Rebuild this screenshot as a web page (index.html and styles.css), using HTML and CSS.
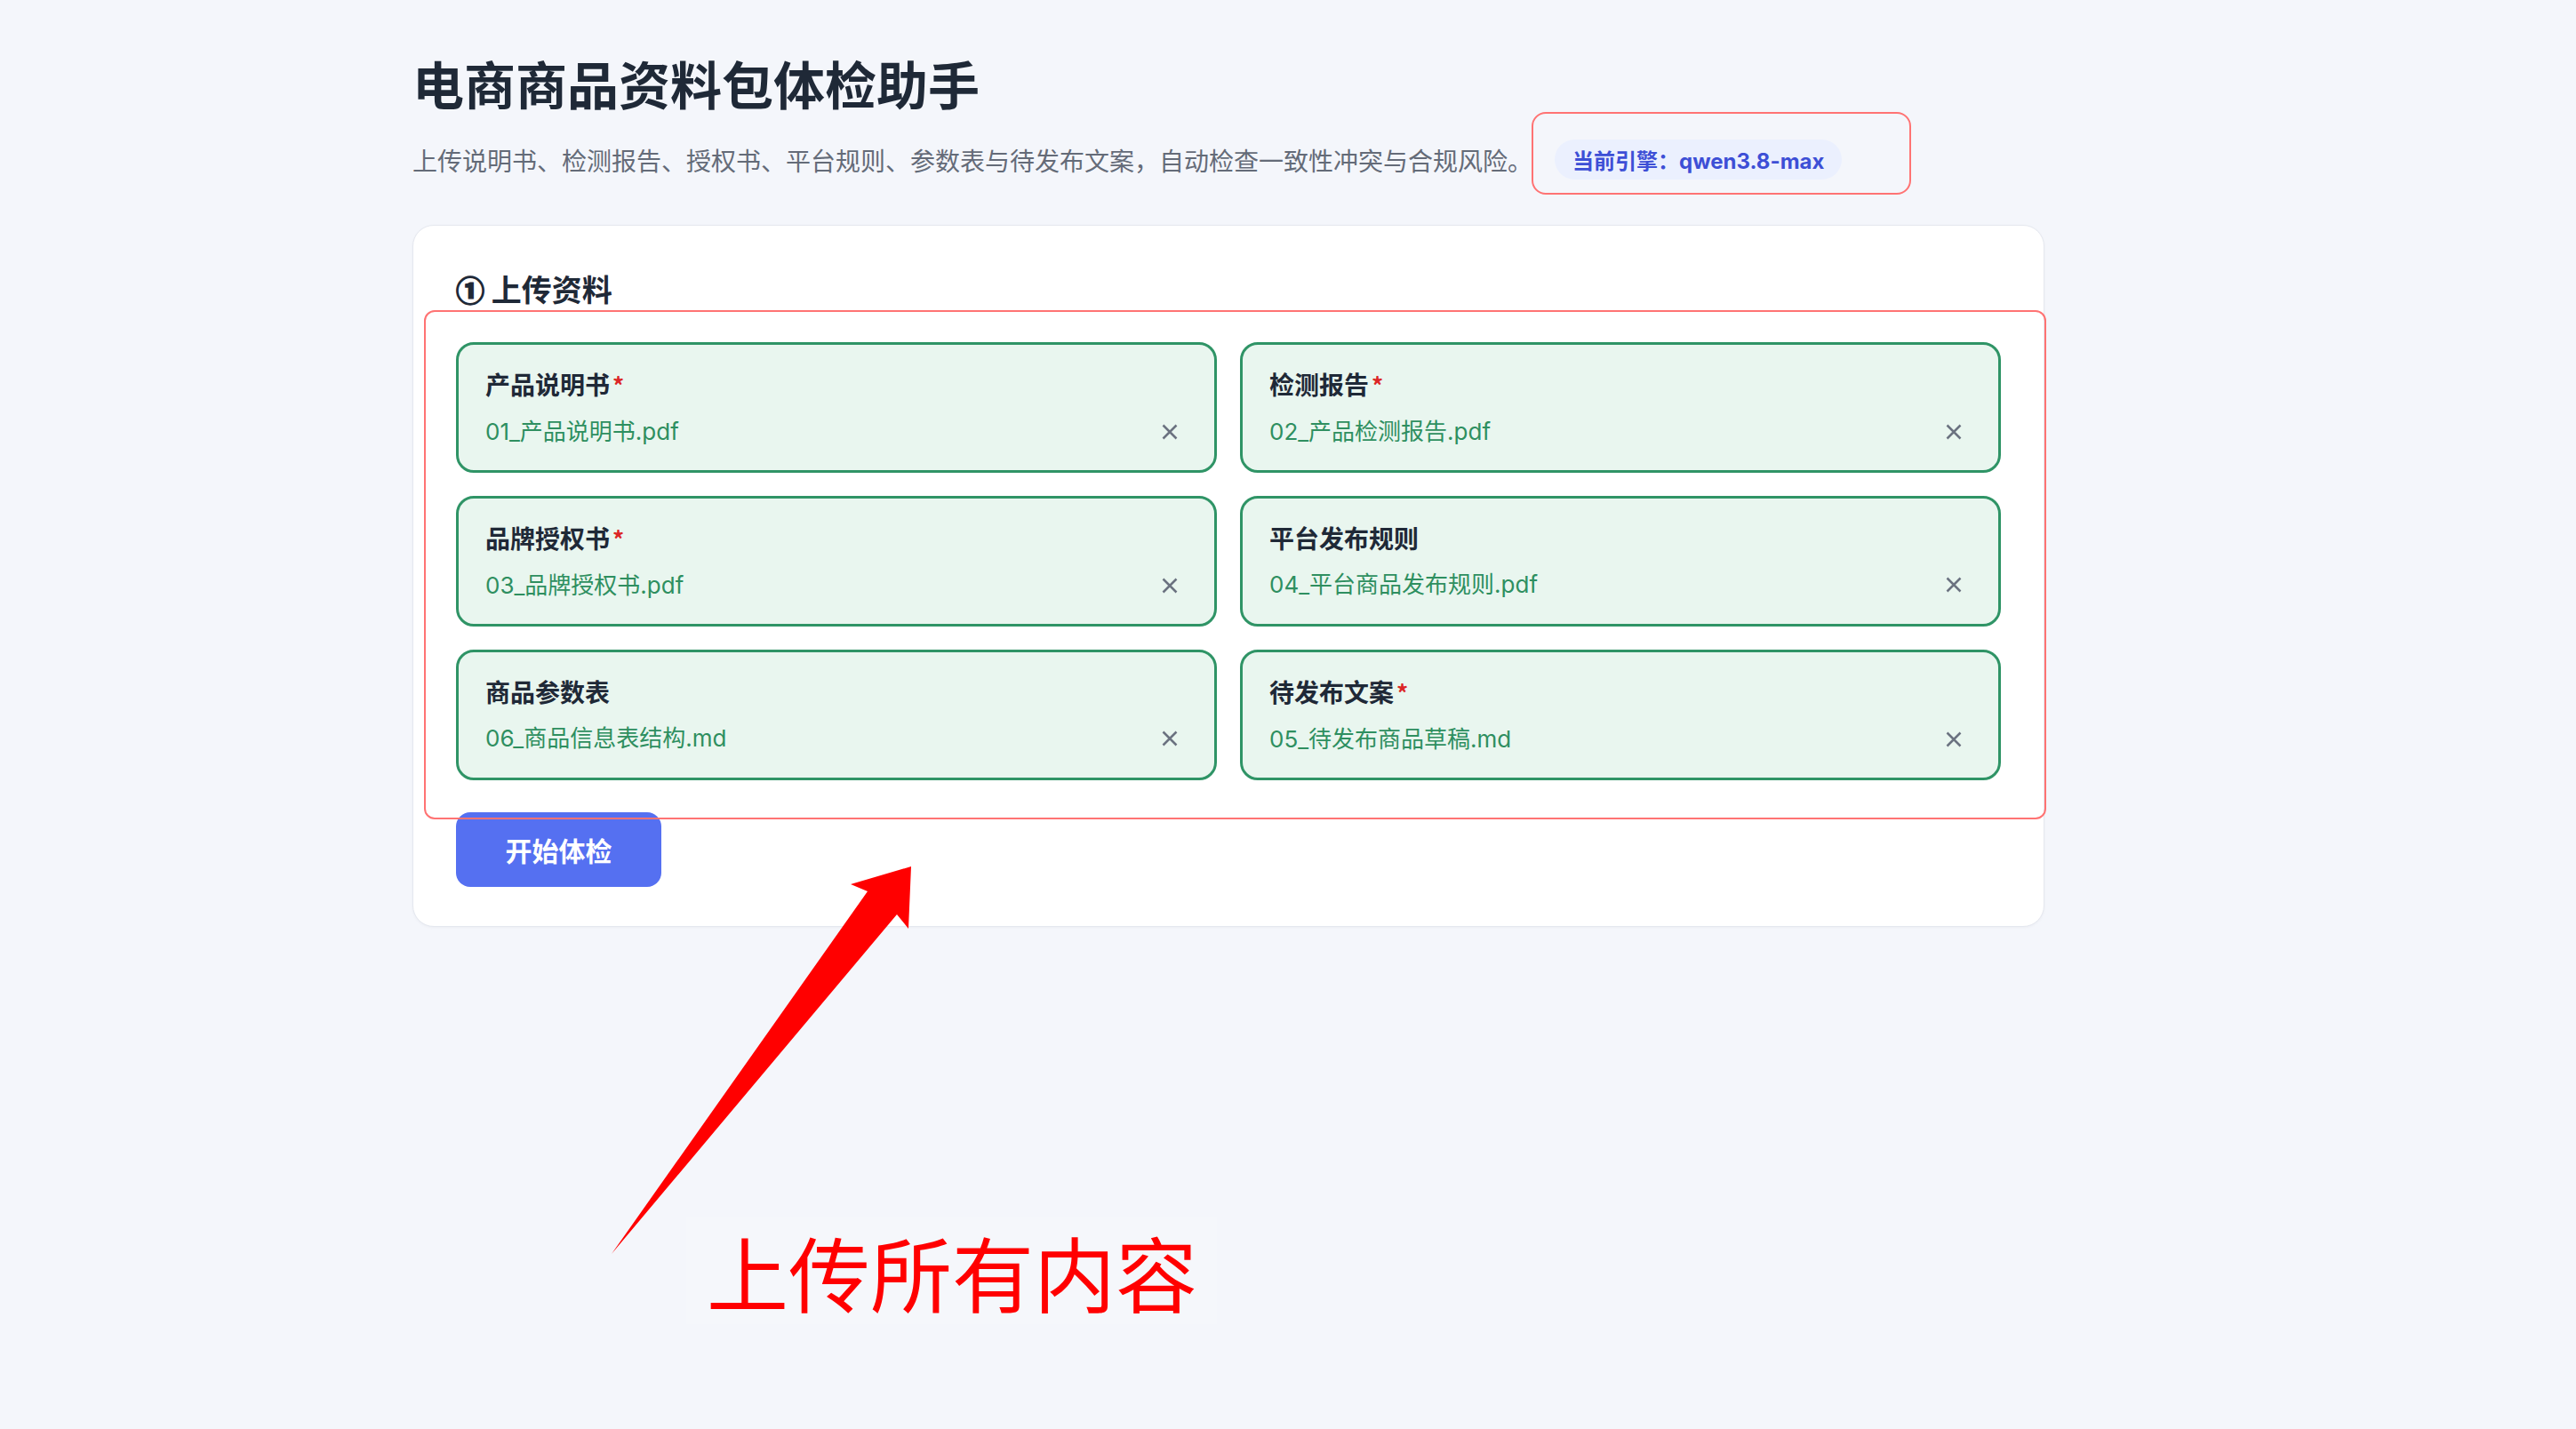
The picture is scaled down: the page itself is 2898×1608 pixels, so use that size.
FILE: index.html
```html
<!DOCTYPE html>
<html lang="zh-CN">
<head>
<meta charset="utf-8">
<title>电商商品资料包体检助手</title>
<link rel="stylesheet" href="styles.css">
</head>
<body>
<main class="page">
  <h1 class="title">电商商品资料包体检助手</h1>
  <div class="sub-row">
    <p class="subtitle">上传说明书、检测报告、授权书、平台规则、参数表与待发布文案，自动检查一致性冲突与合规风险。</p>
    <span class="engine-pill">当前引擎：qwen3.8-max</span>
  </div>

  <section class="card">
    <h2 class="section-title"><span class="step">①</span> 上传资料</h2>
    <div class="file-grid">
      <div class="file-card">
        <div class="file-label">产品说明书<span class="req">*</span></div>
        <div class="file-row"><span class="file-name">01_产品说明书.pdf</span><span class="file-remove"><svg viewBox="0 0 18 18" width="18" height="18"><path d="M1.5 1.5 L16.5 16.5 M16.5 1.5 L1.5 16.5"/></svg></span></div>
      </div>
      <div class="file-card">
        <div class="file-label">检测报告<span class="req">*</span></div>
        <div class="file-row"><span class="file-name">02_产品检测报告.pdf</span><span class="file-remove"><svg viewBox="0 0 18 18" width="18" height="18"><path d="M1.5 1.5 L16.5 16.5 M16.5 1.5 L1.5 16.5"/></svg></span></div>
      </div>
      <div class="file-card">
        <div class="file-label">品牌授权书<span class="req">*</span></div>
        <div class="file-row"><span class="file-name">03_品牌授权书.pdf</span><span class="file-remove"><svg viewBox="0 0 18 18" width="18" height="18"><path d="M1.5 1.5 L16.5 16.5 M16.5 1.5 L1.5 16.5"/></svg></span></div>
      </div>
      <div class="file-card">
        <div class="file-label">平台发布规则</div>
        <div class="file-row"><span class="file-name">04_平台商品发布规则.pdf</span><span class="file-remove"><svg viewBox="0 0 18 18" width="18" height="18"><path d="M1.5 1.5 L16.5 16.5 M16.5 1.5 L1.5 16.5"/></svg></span></div>
      </div>
      <div class="file-card">
        <div class="file-label">商品参数表</div>
        <div class="file-row"><span class="file-name">06_商品信息表结构.md</span><span class="file-remove"><svg viewBox="0 0 18 18" width="18" height="18"><path d="M1.5 1.5 L16.5 16.5 M16.5 1.5 L1.5 16.5"/></svg></span></div>
      </div>
      <div class="file-card">
        <div class="file-label">待发布文案<span class="req">*</span></div>
        <div class="file-row"><span class="file-name">05_待发布商品草稿.md</span><span class="file-remove"><svg viewBox="0 0 18 18" width="18" height="18"><path d="M1.5 1.5 L16.5 16.5 M16.5 1.5 L1.5 16.5"/></svg></span></div>
      </div>
    </div>
    <button class="start-btn" type="button">开始体检</button>
  </section>
</main>

<div class="mark mark-engine"></div>
<div class="mark mark-upload"></div>
<svg class="mark-arrow" viewBox="0 0 2898 1608" width="2898" height="1608">
  <polygon points="1025,975 1022,1045 1009,1029 688,1411 976,1003 957,995"/>
</svg>
<div class="mark-note">上传所有内容</div>
</body>
</html>
```

FILE: styles.css
```css
html, body {
  margin: 0;
  padding: 0;
}

body {
  position: relative;
  min-height: 1608px;
  background: #f4f6fb;
  font-family: "Inter", "Noto Sans CJK SC", "Noto Sans", sans-serif;
  color: #1f2937;
  overflow: hidden;
}

.page {
  width: 1836px;
  padding: 53px 0 0 464px;
}

.title {
  margin: 0;
  font-family: "Noto Sans CJK SC", sans-serif;
  font-size: 58px;
  line-height: 80px;
  font-weight: 700;
  color: #1f2937;
}

.sub-row {
  display: flex;
  align-items: center;
  gap: 25px;
  margin-top: 24px;
}

.subtitle {
  margin: 0;
  font-family: "Noto Sans CJK SC", sans-serif;
  font-size: 28px;
  line-height: 40px;
  color: #646b78;
  white-space: nowrap;
}

.engine-pill {
  display: inline-flex;
  align-items: center;
  height: 45px;
  padding: 0 20px;
  border-radius: 23px;
  background: #ebf0fe;
  color: #3d4fd6;
  font-size: 24px;
  font-weight: 700;
  white-space: nowrap;
}

.card {
  margin-top: 51px;
  background: #ffffff;
  border: 1px solid #e5e8ef;
  border-radius: 24px;
  padding: 47px 48px 44px;
  box-shadow: 0 1px 3px rgba(20, 30, 60, 0.04);
}

.section-title {
  margin: 0 0 36px;
  font-family: "Noto Sans CJK SC", sans-serif;
  font-size: 34px;
  line-height: 48px;
  font-weight: 700;
  color: #1f2937;
}

.step {
  font-size: 32px;
  font-weight: 900;
  -webkit-text-stroke: 1.4px #1f2937;
}

.file-grid {
  display: grid;
  grid-template-columns: 1fr 1fr;
  column-gap: 26px;
  row-gap: 26px;
}

.file-card {
  height: 147px;
  box-sizing: border-box;
  border: 3px solid #2f9466;
  border-radius: 20px;
  background: #e9f6ef;
  padding: 24px 30px;
  display: flex;
  flex-direction: column;
  gap: 13px;
}

.file-label {
  font-family: "Noto Sans CJK SC", sans-serif;
  font-size: 28px;
  line-height: 40px;
  font-weight: 700;
  color: #1f2937;
}

.req {
  color: #dc2626;
  margin-left: 3px;
  font-size: 26px;
}

.file-row {
  display: flex;
  align-items: center;
  justify-content: space-between;
  height: 40px;
}

.file-name {
  font-size: 26px;
  line-height: 40px;
  color: #2e8f60;
}

.file-remove {
  width: 40px;
  height: 40px;
  display: flex;
  align-items: center;
  justify-content: center;
}

.file-remove path {
  stroke: #6b7280;
  stroke-width: 2.5;
  fill: none;
}

.start-btn {
  margin-top: 36px;
  width: 231px;
  height: 84px;
  border: none;
  border-radius: 16px;
  background: #5570f1;
  color: #ffffff;
  font-family: "Noto Sans CJK SC", sans-serif;
  font-size: 30px;
  font-weight: 700;
  padding: 0;
}

/* annotation overlays */
.mark {
  position: absolute;
  border: 2px solid #ff7373;
  pointer-events: none;
}

.mark-engine {
  left: 1723px;
  top: 126px;
  width: 423px;
  height: 89px;
  border-radius: 16px;
}

.mark-upload {
  left: 477px;
  top: 349px;
  width: 1821px;
  height: 569px;
  border-radius: 12px;
}

.mark-arrow {
  position: absolute;
  left: 0;
  top: 0;
  pointer-events: none;
}

.mark-arrow polygon {
  fill: #ff0000;
}

.mark-note {
  position: absolute;
  left: 772px;
  top: 1369px;
  padding: 15px 22px 14px 23px;
  font-family: "Noto Sans CJK SC", sans-serif;
  font-size: 92px;
  line-height: 92px;
  font-weight: 400;
  color: #ff0000;
  background: rgba(255, 255, 255, 0.12);
  white-space: nowrap;
}
```
